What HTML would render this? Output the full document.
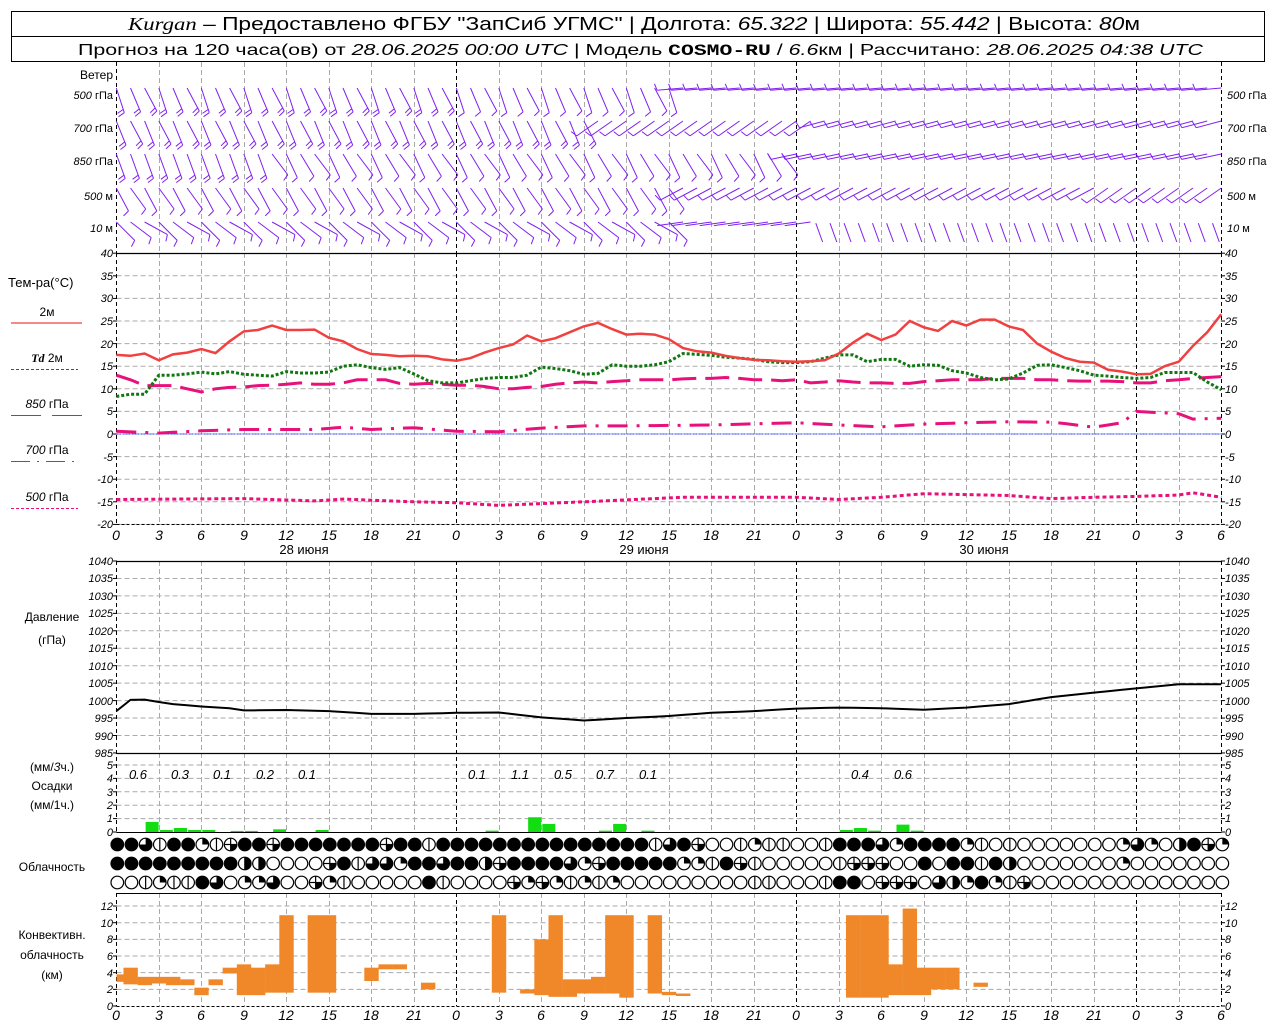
<!DOCTYPE html>
<html><head><meta charset="utf-8"><style>
html,body{margin:0;padding:0;background:#fff;}
svg{display:block;font-family:"Liberation Sans",sans-serif;}
.tl{font-size:11px;font-style:italic;text-anchor:end;}
.tr{font-size:11px;font-style:italic;text-anchor:start;}
.xl{font-size:14px;font-style:italic;text-anchor:middle;}
.lb{font-size:12px;text-anchor:middle;}
</style></head><body>
<svg id="s" width="1280" height="1024" viewBox="0 0 1280 1024" xmlns="http://www.w3.org/2000/svg">
<rect x="0" y="0" width="1280" height="1024" fill="#fff"/>
<g id="g"></g>
<rect x="11.5" y="11.5" width="1253" height="50" fill="none" stroke="#000"/>
<line x1="11" y1="36.5" x2="1265" y2="36.5" stroke="#000"/>
<text x="128" y="30" font-size="18" textLength="1012" lengthAdjust="spacingAndGlyphs"><tspan font-family="Liberation Serif" font-style="italic">Kurgan</tspan> – Предоставлено ФГБУ "ЗапСиб УГМС" | Долгота: <tspan font-style="italic">65.322</tspan> | Широта: <tspan font-style="italic">55.442</tspan> | Высота: <tspan font-style="italic">80</tspan>м</text>
<text x="78" y="55" font-size="16" textLength="1125" lengthAdjust="spacingAndGlyphs">Прогноз на 120 часа(ов) от <tspan font-style="italic">28.06.2025 00:00 UTC</tspan>  | Модель <tspan font-family="Liberation Mono" font-weight="bold">COSMO-RU</tspan> / <tspan font-style="italic">6.6</tspan>км | Рассчитано: <tspan font-style="italic">28.06.2025 04:38 UTC</tspan></text>
<text x="113" y="79" font-size="12" text-anchor="end">Ветер</text>
<g font-size="11" text-anchor="end"><text x="113" y="99"><tspan font-style="italic">500</tspan> гПа</text><text x="113" y="132"><tspan font-style="italic">700</tspan> гПа</text><text x="113" y="165"><tspan font-style="italic">850</tspan> гПа</text><text x="113" y="200"><tspan font-style="italic">500</tspan>  м</text><text x="113" y="232"><tspan font-style="italic">10</tspan>   м</text></g>
<g font-size="11" text-anchor="start"><text x="1227" y="99"><tspan font-style="italic">500</tspan> гПа</text><text x="1227" y="132"><tspan font-style="italic">700</tspan> гПа</text><text x="1227" y="165"><tspan font-style="italic">850</tspan> гПа</text><text x="1227" y="200"><tspan font-style="italic">500</tspan>  м</text><text x="1227" y="232"><tspan font-style="italic">10</tspan>   м</text></g>
<text x="8" y="287" font-size="13">Тем-ра(°C)</text>
<text x="47" y="316" class="lb">2м</text>
<line x1="11" y1="323" x2="82" y2="323" stroke="#f04040" stroke-width="1.2"/>
<text x="47" y="362" class="lb"><tspan font-style="italic" font-weight="bold" font-family="Liberation Serif">Td</tspan>  2м</text>
<line x1="11" y1="369.5" x2="78" y2="369.5" stroke="#117711" stroke-width="1" stroke-dasharray="3,2"/>
<text x="47" y="408" class="lb"><tspan font-style="italic">850</tspan> гПа</text>
<line x1="11" y1="415.5" x2="41" y2="415.5" stroke="#e8107a"/><line x1="52" y1="415.5" x2="82" y2="415.5" stroke="#e8107a"/>
<text x="47" y="454" class="lb"><tspan font-style="italic">700</tspan> гПа</text>
<line x1="11" y1="461.5" x2="78" y2="461.5" stroke="#e8107a" stroke-dasharray="19,7,2,7"/>
<text x="47" y="501" class="lb"><tspan font-style="italic">500</tspan> гПа</text>
<line x1="11" y1="508.5" x2="78" y2="508.5" stroke="#e8107a" stroke-dasharray="3,2"/>
<text x="52" y="621" class="lb" font-size="13">Давление</text>
<text x="52" y="644" class="lb" font-size="13">(гПа)</text>
<text x="52" y="771" class="lb" font-size="13">(мм/<tspan font-style="italic">3</tspan>ч.)</text>
<text x="52" y="790" class="lb" font-size="13">Осадки</text>
<text x="52" y="809" class="lb" font-size="13">(мм/1ч.)</text>
<text x="52" y="871" class="lb" font-size="13">Облачность</text>
<text x="52" y="939" class="lb" font-size="13">Конвективн.</text>
<text x="52" y="959" class="lb" font-size="13">облачность</text>
<text x="52" y="979" class="lb" font-size="13">(км)</text>
<g class="tl"><text x="113" y="257">40</text><text x="113" y="280">35</text><text x="113" y="302">30</text><text x="113" y="325">25</text><text x="113" y="348">20</text><text x="113" y="370">15</text><text x="113" y="393">10</text><text x="113" y="415">5</text><text x="113" y="438">0</text><text x="113" y="461">-5</text><text x="113" y="483">-10</text><text x="113" y="506">-15</text><text x="113" y="528">-20</text></g>
<g class="tr"><text x="1225" y="257">40</text><text x="1225" y="280">35</text><text x="1225" y="302">30</text><text x="1225" y="325">25</text><text x="1225" y="348">20</text><text x="1225" y="370">15</text><text x="1225" y="393">10</text><text x="1225" y="415">5</text><text x="1225" y="438">0</text><text x="1225" y="461">-5</text><text x="1225" y="483">-10</text><text x="1225" y="506">-15</text><text x="1225" y="528">-20</text></g>
<g class="tl" font-size="10"><text x="113" y="565">1040</text><text x="113" y="582">1035</text><text x="113" y="600">1030</text><text x="113" y="617">1025</text><text x="113" y="635">1020</text><text x="113" y="652">1015</text><text x="113" y="670">1010</text><text x="113" y="687">1005</text><text x="113" y="705">1000</text><text x="113" y="722">995</text><text x="113" y="740">990</text><text x="113" y="757">985</text></g>
<g class="tr" font-size="10"><text x="1225" y="565">1040</text><text x="1225" y="582">1035</text><text x="1225" y="600">1030</text><text x="1225" y="617">1025</text><text x="1225" y="635">1020</text><text x="1225" y="652">1015</text><text x="1225" y="670">1010</text><text x="1225" y="687">1005</text><text x="1225" y="705">1000</text><text x="1225" y="722">995</text><text x="1225" y="740">990</text><text x="1225" y="757">985</text></g>
<g class="tl" font-size="10"><text x="113" y="836">0</text><text x="113" y="822">1</text><text x="113" y="809">2</text><text x="113" y="796">3</text><text x="113" y="782">4</text><text x="113" y="769">5</text></g>
<g class="tr" font-size="10"><text x="1225" y="836">0</text><text x="1225" y="822">1</text><text x="1225" y="809">2</text><text x="1225" y="796">3</text><text x="1225" y="782">4</text><text x="1225" y="769">5</text></g>
<g font-size="13" font-style="italic" text-anchor="middle"><text x="138" y="779">0.6</text><text x="180" y="779">0.3</text><text x="222" y="779">0.1</text><text x="265" y="779">0.2</text><text x="307" y="779">0.1</text><text x="477" y="779">0.1</text><text x="520" y="779">1.1</text><text x="563" y="779">0.5</text><text x="605" y="779">0.7</text><text x="648" y="779">0.1</text><text x="860" y="779">0.4</text><text x="903" y="779">0.6</text></g>
<g class="tl" font-size="10"><text x="113" y="1010">0</text><text x="113" y="993">2</text><text x="113" y="977">4</text><text x="113" y="960">6</text><text x="113" y="943">8</text><text x="113" y="927">10</text><text x="113" y="910">12</text></g>
<g class="tr" font-size="10"><text x="1225" y="1010">0</text><text x="1225" y="993">2</text><text x="1225" y="977">4</text><text x="1225" y="960">6</text><text x="1225" y="943">8</text><text x="1225" y="927">10</text><text x="1225" y="910">12</text></g>
<g class="xl"><text x="116" y="540">0</text><text x="159" y="540">3</text><text x="201" y="540">6</text><text x="244" y="540">9</text><text x="286" y="540">12</text><text x="329" y="540">15</text><text x="371" y="540">18</text><text x="414" y="540">21</text><text x="456" y="540">0</text><text x="499" y="540">3</text><text x="541" y="540">6</text><text x="584" y="540">9</text><text x="626" y="540">12</text><text x="669" y="540">15</text><text x="711" y="540">18</text><text x="754" y="540">21</text><text x="796" y="540">0</text><text x="839" y="540">3</text><text x="881" y="540">6</text><text x="924" y="540">9</text><text x="966" y="540">12</text><text x="1009" y="540">15</text><text x="1051" y="540">18</text><text x="1094" y="540">21</text><text x="1136" y="540">0</text><text x="1179" y="540">3</text><text x="1221" y="540">6</text></g>
<g font-size="13" text-anchor="middle"><text x="304" y="554">28 июня</text><text x="644" y="554">29 июня</text><text x="984" y="554">30 июня</text></g>
<g class="xl"><text x="116" y="1020">0</text><text x="159" y="1020">3</text><text x="201" y="1020">6</text><text x="244" y="1020">9</text><text x="286" y="1020">12</text><text x="329" y="1020">15</text><text x="371" y="1020">18</text><text x="414" y="1020">21</text><text x="456" y="1020">0</text><text x="499" y="1020">3</text><text x="541" y="1020">6</text><text x="584" y="1020">9</text><text x="626" y="1020">12</text><text x="669" y="1020">15</text><text x="711" y="1020">18</text><text x="754" y="1020">21</text><text x="796" y="1020">0</text><text x="839" y="1020">3</text><text x="881" y="1020">6</text><text x="924" y="1020">9</text><text x="966" y="1020">12</text><text x="1009" y="1020">15</text><text x="1051" y="1020">18</text><text x="1094" y="1020">21</text><text x="1136" y="1020">0</text><text x="1179" y="1020">3</text><text x="1221" y="1020">6</text></g>
</svg>
<script>
(function(){
var NS="http://www.w3.org/2000/svg",g=document.getElementById("g");
function el(n,a){var e=document.createElementNS(NS,n);for(var k in a)e.setAttribute(k,a[k]);g.appendChild(e);return e;}
function X(h){return 116.3+h*14.167;}
function YT(t){return 434-4.52*t;}
function YP(p){return 561+(1040-p)*3.49;}
function YC(k){return 1006-8.33*k;}
var L=116.5,R=1221.5;
function hg(y){el("line",{x1:L,x2:R,y1:y,y2:y,stroke:"#aaa","stroke-dasharray":"5,3"});}
for(var t=35;t>=-20;t-=5)hg(YT(t));
for(var p=1035;p>=990;p-=5)hg(YP(p));
for(var i=1;i<=5;i++)hg(832-13.4*i);
for(var k=2;k<=12;k+=2)hg(YC(k));
var segs=[[62,253],[253,524],[561,832],[893,1006]];
for(var h=0;h<=78;h+=3){var x=Math.round(X(h))+.5,day=(h%24==0)||h==78;
 segs.forEach(function(s){el("line",{x1:x,x2:x,y1:s[0],y2:s[1],stroke:day?"#000":"#aaa","stroke-dasharray":day?"4,3":"5,3"});});}
[[253.5],[561.5],[753.5]].forEach(function(a){el("line",{x1:L,x2:R,y1:a[0],y2:a[0],stroke:"#000","stroke-width":1.3});});
el("line",{x1:L,x2:R,y1:893.5,y2:893.5,stroke:"#000"});
el("line",{x1:L,x2:R,y1:1006.5,y2:1006.5,stroke:"#000","stroke-dasharray":"3,2"});
el("line",{x1:L,x2:R,y1:832.5,y2:832.5,stroke:"#000"});
el("line",{x1:L,x2:R,y1:524.5,y2:524.5,stroke:"#000","stroke-dasharray":"3,2"});
function tk(y){el("line",{x1:113,x2:117,y1:y,y2:y,stroke:"#000"});el("line",{x1:1221,x2:1225,y1:y,y2:y,stroke:"#000"});}
for(var t=40;t>=-20;t-=5)tk(YT(t));for(var p=1040;p>=985;p-=5)tk(YP(p));for(i=0;i<=5;i++)tk(832-13.4*i);for(k=0;k<=12;k+=2)tk(YC(k));
el("line",{x1:L,x2:R,y1:434,y2:434,stroke:"#2244ff","stroke-dasharray":"2,1"});
function pl(arr,yf,st){var pts=arr.map(function(v,i){return X(i).toFixed(1)+","+yf(v).toFixed(1);}).join(" ");var a={points:pts,fill:"none"};for(var k in st)a[k]=st[k];el("polyline",a);}
var T2=[17.5,17.3,17.8,16.3,17.6,18,18.8,17.9,20.5,22.7,23,24,23,23,23.1,21.3,20.5,18.8,17.7,17.5,17.2,17.3,17.2,16.5,16.2,16.8,18,19,19.8,21.8,20.5,21.2,22.5,23.8,24.6,23.2,22,22.2,22,21,19,18.3,18,17.3,16.8,16.4,16.3,16.1,16,16.1,16.3,17.8,20.2,22.2,20.8,22,25,23.6,22.8,25,24,25.3,25.3,23.8,23,20,18.2,16.8,16,15.8,14.2,13.8,13.2,13.3,15,16,19.5,22.5,26.5];
var TD=[8.3,8.8,8.8,13,13,13.3,13.7,13.3,13.8,13.2,13,12.8,13.8,13.5,13.5,13.7,15,15.3,14.7,14.3,14.7,13.3,11.8,11.3,11.3,11.8,12.3,12.5,12.5,13,14.8,14.5,14,13.2,13.4,15.3,15,15,15.3,16,17.8,17.6,17.4,17,16.8,16.5,16,15.8,15.8,16,16.8,17.5,17.5,16,16.5,16.5,15,15.3,15.2,14,13.5,12.5,12,12.2,13.5,15.2,15.3,14.7,14,13,12.8,12.5,12.3,12.5,13.6,13.6,13.6,11.5,9.8];
var T85=[13,12,10.7,10.7,10.7,10,9.3,10,10.3,10.4,10.7,10.8,11,11.3,11,11,11.3,12,12,12,11.2,11,11.2,11,10.8,10.8,10.5,10,10,10.3,10.5,11,11.3,11.5,11.3,11.6,11.8,12,12,12,12.2,12.3,12.3,12.5,12.3,12,12,11.8,12,11.3,11.5,11.8,11.5,11.3,11.3,11.2,11.2,11.6,11.8,12,12,12,12.3,12.3,12.3,12,12,11.8,11.7,11.7,11.7,11.6,11.3,11.3,11.8,12,12.3,12.5,12.7];
function interp(k){var a=[];for(var h=0;h<=78;h++){for(var j=0;j<k.length-1;j++){if(h>=k[j][0]&&h<=k[j+1][0]){var f=(h-k[j][0])/(k[j+1][0]-k[j][0]||1);a.push(k[j][1]+f*(k[j+1][1]-k[j][1]));break;}}}return a;}
var T70=interp([[0,0.6],[3,0.2],[6,0.7],[9,1],[14,1],[16,1.5],[18,1],[21,1.4],[24,0.6],[27,0.5],[30,1.3],[33,1.8],[36,1.8],[42,2],[48,2.5],[51,2],[54,1.6],[57,2.2],[60,2.5],[63,2.7],[66,2.6],[67,2.3],[69,1.5],[71,2.5],[72,5],[75,4.5],[76,3.3],[78,3.5]]);
var T50=interp([[0,-14.5],[9,-14.3],[14,-14.8],[16,-14.4],[21,-15],[24,-15.2],[27,-15.8],[33,-15],[40,-14],[48,-14],[51,-14.5],[54,-14],[57,-13.2],[63,-13.6],[66,-14.3],[69,-14],[72,-13.8],[75,-13.5],[76,-13],[78,-14]]);
pl(T70,YT,{stroke:"#e8107a","stroke-width":3,"stroke-dasharray":"20,9,3,9"});
pl(T50,YT,{stroke:"#e8107a","stroke-width":3,"stroke-dasharray":"4,3"});
pl(T85,YT,{stroke:"#e8107a","stroke-width":3,"stroke-dasharray":"24,9"});
pl(TD,YT,{stroke:"#117711","stroke-width":3,"stroke-dasharray":"3,2"});
pl(T2,YT,{stroke:"#f04040","stroke-width":2.5});
var PP=interp([[0,997],[1,1000.2],[2,1000.3],[3,999.6],[4,999],[6,998.3],[8,997.8],[9,997.2],[12,997.3],[15,997],[18,996.2],[21,996.2],[24,996.5],[27,996.6],[30,995.2],[33,994.3],[36,995],[39,995.6],[42,996.5],[45,997],[48,997.7],[51,998],[54,997.8],[57,997.4],[60,998],[63,999],[66,1001],[69,1002.3],[72,1003.5],[75,1004.7],[78,1004.7]]);
pl(PP,YP,{stroke:"#000","stroke-width":2});
[[2,.75],[3,.15],[4,.3],[5,.15],[6,.15],[8,.08],[9,.08],[11,.2],[14,.15],[26,.1],[29,1.1],[30,.6],[34,.1],[35,.6],[37,.1],[51,.15],[52,.3],[53,.1],[55,.55],[56,.1]].forEach(function(b){var x=X(b[0]),h=b[1]*13.4;el("rect",{x:x+1,y:832-h,width:13,height:h,fill:"#11dd11"});});
var CV=[[0,2.9,3.8],[1,2.6,4.6],[2,2.5,3.5],[3,2.7,3.5],[4,2.5,3.5],[5,2.5,3.2],[6,1.3,2.2],[7,2.5,3.2],[8,3.9,4.6],[9,1.3,5],[10,1.3,4.6],[11,1.6,5],[12,1.6,10.9],[14,1.6,10.9],[15,1.6,10.9],[18,3,4.6],[19,4.4,5],[20,4.4,5],[22,2,2.8],[27,1.6,10.9],[29,1.5,2],[30,1.3,8],[31,1.1,10.9],[32,1.1,3.2],[33,1.5,3.2],[34,1.5,3.5],[35,1.5,10.9],[36,1,10.9],[38,1.5,10.9],[39,1.3,1.7],[40,1.2,1.5],[52,1,10.9],[53,1,10.9],[54,1,10.9],[55,1.3,5],[56,1.3,11.7],[57,1.3,4.6],[58,2,4.6],[59,2,4.6],[61,2.3,2.8]];
CV.forEach(function(c){var x=c[0]==0?116.5:X(c[0])-7,w=c[0]==0?7:14.4;el("rect",{x:x,y:YC(c[2]),width:w,height:YC(c[1])-YC(c[2]),fill:"#f0882a"});});
var rows=[
"FFTVFFQVBFFBFFFFFFFBFFVFFFFFFFFFFFFFFFVTFBEEVQVVEEVFFFTQFFFFQVEVEEEEEEEQTQEHFBQ",
"FFFFFFFFFHHEEEEBFVTTQFFTFFHBFFFFTQBFFFFFQQVFBVEEEEEVBBBEEFEFFVFHEEEEEEEQEEEEEEEE",
"EEVQVVFTEQQTEEBQVEEEEEFVEEEEBQBQVQVQEEEEEEEEEVVEEEVFFEBBBETHQFQVBEEEEEEEEEEEEEEEE"];
var cy=[844.5,863.5,882.5];
rows.forEach(function(r,ri){for(var i=0;i<=78;i++){var c=r[i]||"E",x=X(i)+1,y=cy[ri],rr=6.3;
 var f=(c=="F")?"#000":"#fff";el("circle",{cx:x,cy:y,r:rr,fill:f,stroke:"#000","stroke-width":1.2});
 if(c=="H")el("path",{d:"M"+x+","+(y-rr)+"A"+rr+","+rr+" 0 0 1 "+x+","+(y+rr)+"Z",fill:"#000"});
 if(c=="T")el("path",{d:"M"+x+","+y+"L"+x+","+(y-rr)+"A"+rr+","+rr+" 0 1 1 "+(x-rr)+","+y+"Z",fill:"#000"});
 if(c=="Q")el("path",{d:"M"+x+","+y+"L"+x+","+(y-rr)+"A"+rr+","+rr+" 0 0 1 "+(x+rr)+","+y+"Z",fill:"#000"});
 if(c=="V"||c=="H"||c=="B")el("line",{x1:x,x2:x,y1:y-rr,y2:y+rr,stroke:"#000","stroke-width":1.2});
 if(c=="B"){el("line",{x1:x-rr,x2:x+rr,y1:y,y2:y,stroke:"#000","stroke-width":1.2});el("path",{d:"M"+(x+rr)+","+y+"A"+rr+","+rr+" 0 0 1 "+x+","+(y+rr)+"L"+x+","+y+"Z",fill:"#000"});}
}});
var col="#8020f0";
function barb(x,y,th,n,len){var r=th*Math.PI/180,dx=Math.sin(r),dy=Math.cos(r);len=len||26;
 var tx=x+dx*len,ty=y+dy*len;var d="M"+x.toFixed(1)+","+y.toFixed(1)+"L"+tx.toFixed(1)+","+ty.toFixed(1);
 var fx=-dy+0.3*dx,fy=dx+0.3*dy,m=Math.sqrt(fx*fx+fy*fy);fx/=m;fy/=m;
 for(var j=0;j<n;j++){var px=tx-dx*j*3.5,py=ty-dy*j*3.5,fl=7;d+="M"+px.toFixed(1)+","+py.toFixed(1)+"l"+(fx*fl).toFixed(1)+","+(fy*fl).toFixed(1);}
 el("path",{d:d,stroke:col,"stroke-width":1,fill:"none"});}
var W=[[88,function(h){return h<40?[18+(h%3)*5,h<24?2:1]:[-85,1];}],
[121,function(h){return h<34?[22+(h%2)*6,2]:(h<50?[-55,1]:[-75,1]);}],
[154,function(h){return h<11?[20,2]:(h<48?[25+(h%3)*6,1]:[-78,1]);}],
[188,function(h){return h<40?[28+(h%2)*8,1]:(h<70?[-62,1]:[-55,1]);}],
[222,function(h){return h<40?[45+(h%3)*8,1]:(h<50?[-82,0]:[160,0]);}]];
W.forEach(function(w){for(var h=0;h<=78;h++){var v=w[1](h),x=X(h),y=w[0];if(v[0]==160){barb(x-2,y+20,200,0,20);}else barb(x,y,v[0],v[1]);}});
})();
</script>
</body></html>
